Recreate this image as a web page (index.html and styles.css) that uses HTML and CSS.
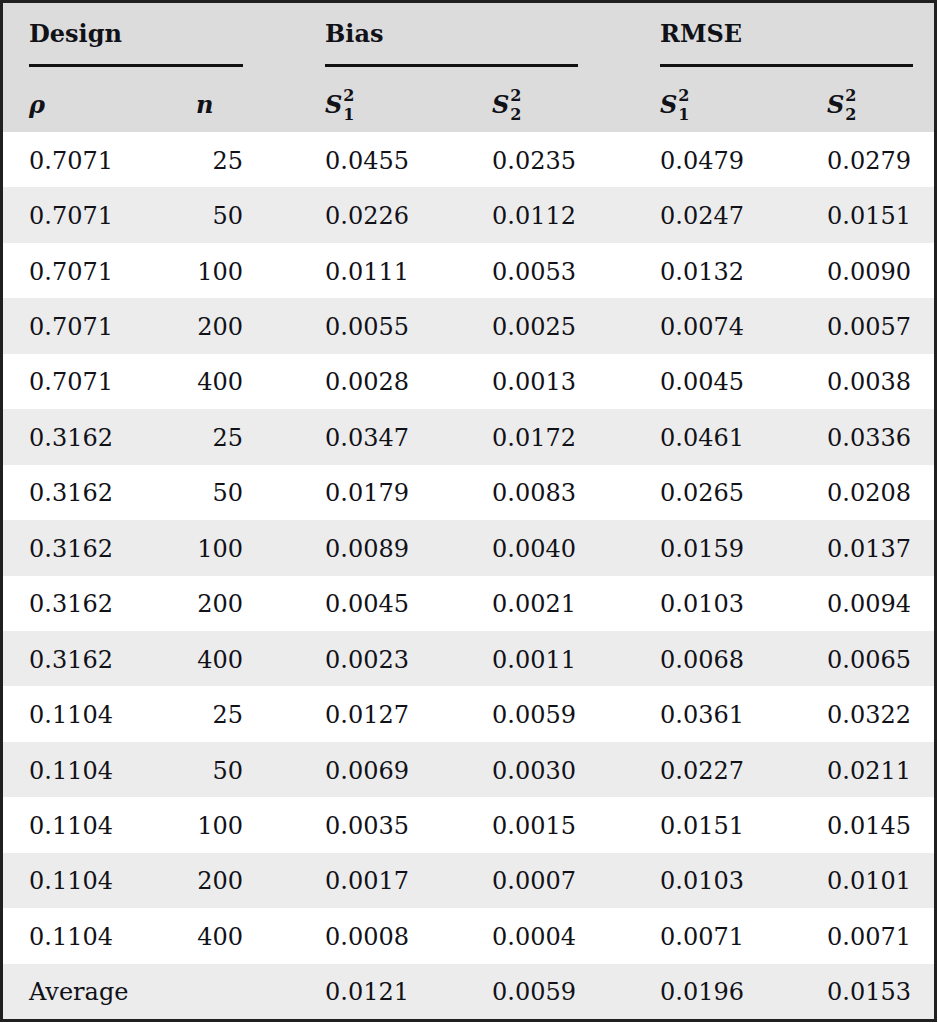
FILE: index.html
```html
<!DOCTYPE html>
<html lang="en">
<head>
<meta charset="utf-8">
<title>Simulation results</title>
<link rel="stylesheet" href="styles.css">
</head>
<body>
<div class="frame">
<table class="results">
  <colgroup>
    <col class="c1"><col class="c2"><col class="c3"><col class="c4"><col class="c5"><col class="c6">
  </colgroup>
  <thead>
    <tr class="groups">
      <th colspan="2" class="g g-design"><div class="gt">Design</div></th>
      <th colspan="2" class="g g-mid"><div class="gt">Bias</div></th>
      <th colspan="2" class="g g-last"><div class="gt">RMSE</div></th>
    </tr>
    <tr class="subs">
      <th class="first"><i>ρ</i></th>
      <th class="n"><i>n</i></th>
      <th class="pad"><i>S</i><span class="ss"><span>2</span><span>1</span></span></th>
      <th><i>S</i><span class="ss"><span>2</span><span>2</span></span></th>
      <th class="pad"><i>S</i><span class="ss"><span>2</span><span>1</span></span></th>
      <th><i>S</i><span class="ss"><span>2</span><span>2</span></span></th>
    </tr>
  </thead>
  <tbody>
    <tr><td class="first">0.7071</td><td class="num">25</td><td class="pad">0.0455</td><td>0.0235</td><td class="pad">0.0479</td><td>0.0279</td></tr>
    <tr><td class="first">0.7071</td><td class="num">50</td><td class="pad">0.0226</td><td>0.0112</td><td class="pad">0.0247</td><td>0.0151</td></tr>
    <tr><td class="first">0.7071</td><td class="num">100</td><td class="pad">0.0111</td><td>0.0053</td><td class="pad">0.0132</td><td>0.0090</td></tr>
    <tr><td class="first">0.7071</td><td class="num">200</td><td class="pad">0.0055</td><td>0.0025</td><td class="pad">0.0074</td><td>0.0057</td></tr>
    <tr><td class="first">0.7071</td><td class="num">400</td><td class="pad">0.0028</td><td>0.0013</td><td class="pad">0.0045</td><td>0.0038</td></tr>
    <tr><td class="first">0.3162</td><td class="num">25</td><td class="pad">0.0347</td><td>0.0172</td><td class="pad">0.0461</td><td>0.0336</td></tr>
    <tr><td class="first">0.3162</td><td class="num">50</td><td class="pad">0.0179</td><td>0.0083</td><td class="pad">0.0265</td><td>0.0208</td></tr>
    <tr><td class="first">0.3162</td><td class="num">100</td><td class="pad">0.0089</td><td>0.0040</td><td class="pad">0.0159</td><td>0.0137</td></tr>
    <tr><td class="first">0.3162</td><td class="num">200</td><td class="pad">0.0045</td><td>0.0021</td><td class="pad">0.0103</td><td>0.0094</td></tr>
    <tr><td class="first">0.3162</td><td class="num">400</td><td class="pad">0.0023</td><td>0.0011</td><td class="pad">0.0068</td><td>0.0065</td></tr>
    <tr><td class="first">0.1104</td><td class="num">25</td><td class="pad">0.0127</td><td>0.0059</td><td class="pad">0.0361</td><td>0.0322</td></tr>
    <tr><td class="first">0.1104</td><td class="num">50</td><td class="pad">0.0069</td><td>0.0030</td><td class="pad">0.0227</td><td>0.0211</td></tr>
    <tr><td class="first">0.1104</td><td class="num">100</td><td class="pad">0.0035</td><td>0.0015</td><td class="pad">0.0151</td><td>0.0145</td></tr>
    <tr><td class="first">0.1104</td><td class="num">200</td><td class="pad">0.0017</td><td>0.0007</td><td class="pad">0.0103</td><td>0.0101</td></tr>
    <tr><td class="first">0.1104</td><td class="num">400</td><td class="pad">0.0008</td><td>0.0004</td><td class="pad">0.0071</td><td>0.0071</td></tr>
    <tr><td class="first">Average</td><td class="num"></td><td class="pad">0.0121</td><td>0.0059</td><td class="pad">0.0196</td><td>0.0153</td></tr>
  </tbody>
</table>
</div>
</body>
</html>
```

FILE: styles.css
```css
html, body {
  margin: 0;
  padding: 0;
  background: #ffffff;
}

.frame {
  box-sizing: border-box;
  width: 937px;
  height: 1022px;
  border: 3px solid #202020;
  background: #ffffff;
  overflow: hidden;
}

.results {
  width: 931px;
  border-collapse: collapse;
  border-spacing: 0;
  table-layout: fixed;
  font-family: "DejaVu Serif", "Liberation Serif", serif;
  font-size: 24px;
  line-height: 28px;
  color: #111118;
}

.c1 { width: 193px; }
.c2 { width: 47px; }
.c3 { width: 249px; }
.c4 { width: 86px; }
.c5 { width: 249px; }
.c6 { width: 107px; }

.results th,
.results td {
  padding: 0;
  text-align: left;
  white-space: nowrap;
}

.results thead tr {
  background: #dcdcdc;
}

.results .groups th {
  font-weight: bold;
  padding-top: 17px;
  vertical-align: top;
}

.gt {
  height: 28px;
  padding-bottom: 16px;
  border-bottom: 3px solid #111111;
}

.results .groups .g-design { padding-left: 26px; }
.results .groups .g-mid { padding-left: 82px; }
.results .groups .g-last { padding-left: 82px; padding-right: 21px; }

.results .subs th {
  font-weight: bold;
  padding-top: 24px;
  padding-bottom: 13px;
  vertical-align: top;
  height: 28px;
}

.subs i {
  font-style: italic;
  font-weight: bold;
}

.ss {
  display: inline-flex;
  flex-direction: column;
  font-size: 16px;
  line-height: 19px;
  font-weight: bold;
  font-style: normal;
  vertical-align: 12px;
  margin: -10px 0 -10px 1px;
}

.results .first { padding-left: 26px; }
.results .pad { padding-left: 82px; }

.results tbody tr {
  height: 55.4375px;
}

.results tbody tr:nth-child(even) {
  background: #ececec;
}

.results td {
  vertical-align: middle;
  padding-top: 2px;
}

.results td.num {
  text-align: right;
}
```
